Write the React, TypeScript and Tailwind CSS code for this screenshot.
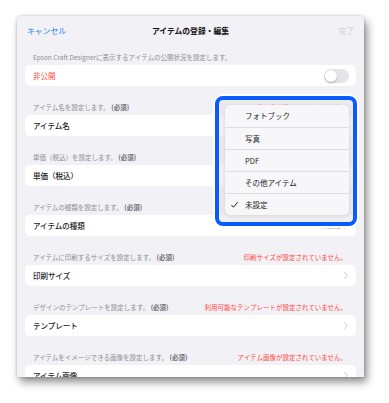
import React from 'react';

const font = { fontFamily: '"Noto Sans CJK JP", "Noto Sans", sans-serif' };

type Section = {
  label: string;
  error?: string;
  title: string;
  value?: string;
  chevron?: boolean;
};

const sections: Section[] = [
  { label: 'アイテム名を設定します。', error: 'アイテム名が設定されていません。', title: 'アイテム名' },
  { label: '単価（税込）を設定します。', error: '単価が設定されていません。', title: '単価（税込）' },
  { label: 'アイテムの種類を設定します。', error: 'アイテムの種類が設定されていません。', title: 'アイテムの種類', value: '未設定', chevron: true },
  { label: 'アイテムに印刷するサイズを設定します。', error: '印刷サイズが設定されていません。', title: '印刷サイズ', chevron: true },
  { label: 'デザインのテンプレートを設定します。', error: '利用可能なテンプレートが設定されていません。', title: 'テンプレート', chevron: true },
  { label: 'アイテムをイメージできる画像を設定します。', error: 'アイテム画像が設定されていません。', title: 'アイテム画像', chevron: true },
];

const menuItems = ['フォトブック', '写真', 'PDF', 'その他アイテム', '未設定'];

function Chevron() {
  return (
    <svg width="4" height="7" viewBox="0 0 4 7" className="ml-[3px]">
      <path d="M0.6 0.6 L3.3 3.5 L0.6 6.4" fill="none" stroke="#c4c4c8" strokeWidth="0.9" strokeLinecap="round" strokeLinejoin="round" />
    </svg>
  );
}

export default function App() {
  return (
    <div className="w-[389px] h-[403px] bg-white pl-[17px] pt-[16px]" style={font}>
      <div className="relative w-[347px] h-[361px] overflow-hidden rounded-t-[4px] bg-[#f1f1f6] shadow-[3px_5px_9px_rgba(0,0,0,0.45),0_0_3px_rgba(0,0,0,0.2)]">
        {/* header */}
        <div className="grid grid-cols-[1fr_auto_1fr] items-center h-[30px] px-[10px] leading-none">
          <span className="text-[7.8px] text-[#1a82ff]">キャンセル</span>
          <span className="text-[7.8px] font-bold text-[#111]">アイテムの登録・編集</span>
          <span className="text-[7.8px] text-[#cdcdd2] text-right">完了</span>
        </div>

        <div className="px-[8px] pt-[4px]">
          <div className="h-[15px] flex items-center px-[8px] text-[6.5px] leading-none text-[#8e8e93]">
            Epson Craft Designerに表示するアイテムの公開状況を設定します。
          </div>
          <div className="h-[21px] bg-white rounded-[5px] flex items-center justify-between pl-[8px] pr-[7px]">
            <span className="text-[7.5px] leading-none text-[#ff4a42]">非公開</span>
            <div className="w-[25px] h-[14px] rounded-full bg-[#e4e4e9] p-[1px]">
              <div className="w-[12px] h-[12px] rounded-full bg-white shadow-[0_1px_2px_rgba(0,0,0,0.3)]" />
            </div>
          </div>

          {sections.map((s) => (
            <div key={s.title} className="mt-[14px]">
              <div className="h-[15px] flex items-center justify-between pl-[8px] pr-[9px] text-[6.5px] leading-none">
                <span className="text-[#8e8e93]">
                  {s.label} <span className="font-semibold text-[#6d6d72]">(必須)</span>
                </span>
                {s.error && <span className="text-[#ff4a42]">{s.error}</span>}
              </div>
              <div className="h-[21px] bg-white rounded-[5px] flex items-center justify-between pl-[8px] pr-[8px]">
                <span className="text-[7.5px] font-medium leading-none text-[#1c1c1e]">{s.title}</span>
                <span className="flex items-center text-[6.5px] leading-none text-[#a0a0a6]">
                  {s.value}
                  {s.chevron && <Chevron />}
                </span>
              </div>
            </div>
          ))}
        </div>

        {/* popover menu, highlighted */}
        <div className="absolute left-[198px] top-[80px] w-[142px] h-[130px] rounded-[8px] border-4 border-[#0a5bff] shadow-[0_0_0_2px_#ffffff] bg-[rgba(228,228,234,0.55)] pl-[6px] pt-[5px]">
          <div className="w-[124px] rounded-[5px] bg-[#f7f7f9] shadow-[0_1px_4px_rgba(0,0,0,0.12)] overflow-hidden">
            {menuItems.map((m, i) => (
              <div
                key={m}
                className={`relative h-[22px] flex items-center pl-[20px] text-[7.5px] leading-none text-[#1c1c1e] ${i > 0 ? 'border-t border-[#dedee2]' : ''}`}
              >
                {m === '未設定' && (
                  <svg width="7" height="6" viewBox="0 0 7 6" className="absolute left-[6px] top-[8px]">
                    <path d="M0.6 3.2 L2.5 5.2 L6.4 0.6" fill="none" stroke="#1c1c1e" strokeWidth="1" strokeLinecap="round" strokeLinejoin="round" />
                  </svg>
                )}
                {m}
              </div>
            ))}
          </div>
        </div>
      </div>
    </div>
  );
}
